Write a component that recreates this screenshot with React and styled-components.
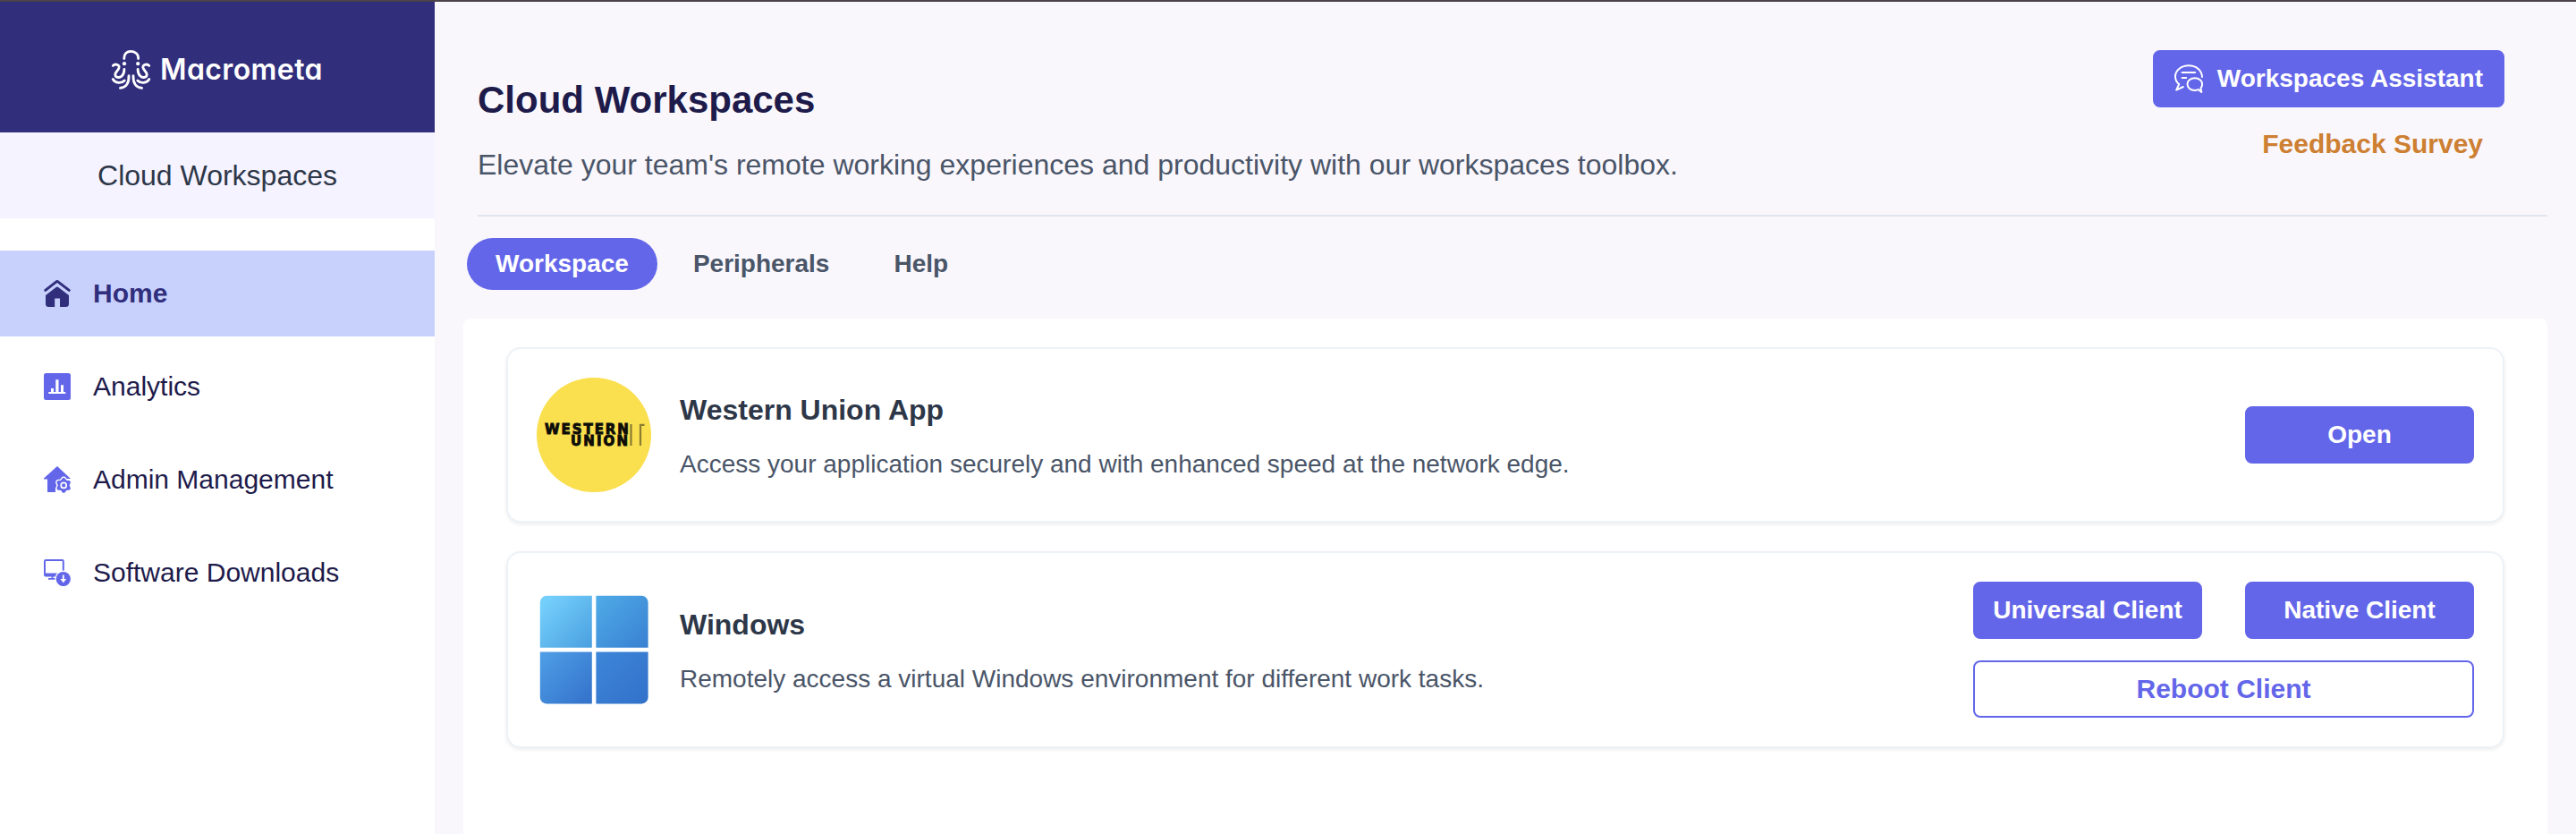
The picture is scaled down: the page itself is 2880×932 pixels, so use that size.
import React from "react";
import styled, { createGlobalStyle, css } from "styled-components";

const Global = createGlobalStyle`
  *, *::before, *::after { box-sizing: border-box; }
  body { margin: 0; background: #f9f7fc; font-family: "Liberation Sans", Arial, sans-serif; }
  h1, h2, p { margin: 0; }
  button { font: inherit; cursor: pointer; }
`;

const Page = styled.div`
  display: flex;
  height: 932px;
  overflow: hidden;
  border-top: 2px solid #4b4349;
`;

const Sidebar = styled.aside`
  width: 486px;
  flex: none;
  background: #fff;
`;

const Brand = styled.div`
  height: 146px;
  display: flex;
  align-items: center;
  gap: 9px;
  padding: 5px 0 0 124px;
  background: #312e7c;
  color: #fff;
`;

const BrandName = styled.span`
  font-family: Inter, sans-serif;
  font-size: 32px;
  font-weight: 600;
  font-feature-settings: "cv11";
  letter-spacing: 0.4px;
`;

const Product = styled.div`
  height: 96px;
  line-height: 96px;
  text-align: center;
  font-size: 32px;
  color: #2d3748;
  background: #f5f3ff;
`;

const Nav = styled.nav`
  display: flex;
  flex-direction: column;
  gap: 8px;
  padding-top: 36px;
`;

const NavItem = styled.a`
  height: 96px;
  display: flex;
  align-items: center;
  gap: 25px;
  padding-left: 49px;
  font-size: 30px;
  color: #1e1b4b;
  svg { color: #6366e9; flex: none; }
  ${(p) => p.$active && css`
    background: #c8d1fc;
    font-weight: 700;
    color: #312e7c;
    svg { color: #312e7c; }
  `}
`;

const Main = styled.main`
  flex: 1;
  padding: 54px 32px 0;
  display: flex;
  flex-direction: column;
`;

const Header = styled.header`
  height: 186px;
  margin-left: 16px;
  padding-right: 48px;
  display: flex;
  justify-content: space-between;
  border-bottom: 2px solid #e2e4ee;
`;

const Title = styled.h1`
  margin-top: 31px;
  font-size: 42px;
  line-height: 50px;
  color: #1e1b4b;
`;

const Lead = styled.p`
  margin-top: 28px;
  font-size: 32px;
  line-height: 38px;
  color: #4a5568;
`;

const HeaderActions = styled.div`
  display: flex;
  flex-direction: column;
  align-items: flex-end;
`;

const Button = styled.button`
  height: 64px;
  min-width: 256px;
  display: flex;
  align-items: center;
  justify-content: center;
  gap: 16px;
  padding: 0 22px;
  border: 2px solid #6366e9;
  border-radius: 8px;
  background: ${(p) => (p.$outline ? "#fff" : "#6366e9")};
  color: ${(p) => (p.$outline ? "#6366e9" : "#fff")};
  font-size: ${(p) => (p.$outline ? 30 : 28)}px;
  font-weight: 700;
  white-space: nowrap;
  ${(p) => p.$wide && css`grid-column: 1 / -1;`}
`;

const SurveyLink = styled.a`
  margin: 23px 24px 0 0;
  font-size: 30px;
  line-height: 36px;
  font-weight: 700;
  color: #cd7f32;
`;

const Tabs = styled.div`
  display: flex;
  gap: 8px;
  margin: 24px 0 32px 4px;
`;

const Tab = styled.button`
  height: 58px;
  padding: 0 32px;
  border: 0;
  border-radius: 29px;
  font-size: 28px;
  font-weight: 700;
  background: ${(p) => (p.$active ? "#6366e9" : "transparent")};
  color: ${(p) => (p.$active ? "#fff" : "#4a5568")};
`;

const Panel = styled.section`
  flex: 1;
  display: flex;
  flex-direction: column;
  gap: 32px;
  padding: 32px 48px;
  border-radius: 8px 8px 0 0;
  background: #fff;
`;

const Card = styled.article`
  display: flex;
  align-items: center;
  gap: 32px;
  padding: 32px;
  border: 2px solid #edf2f7;
  border-radius: 16px;
  background: #fff;
  box-shadow: 0 2px 4px rgba(0, 0, 0, 0.07);
`;

const CardBody = styled.div`
  flex: 1;
  padding-top: 2px;
`;

const CardTitle = styled.h2`
  font-size: 32px;
  line-height: 38px;
  color: #2d3748;
`;

const CardText = styled.p`
  margin-top: 25px;
  font-size: 28px;
  line-height: 34px;
  color: #4a5568;
`;

const CardActions = styled.div`
  display: grid;
  grid-template-columns: repeat(${(p) => p.$columns}, 256px);
  gap: 24px 48px;
`;

const Octopus = () => (
  <svg width="46" height="46" viewBox="0 0 46 46" fill="none" stroke="#fff" strokeWidth="2.8" strokeLinecap="round">
    <path d="M14.8 10.5V9.8C14.8 5 18 2.3 22.2 2.3S30.6 5 30.6 9.8v.7" />
    <circle cx="15" cy="16.2" r="2.1" fill="#fff" stroke="none" />
    <circle cx="30.2" cy="16.2" r="2.1" fill="#fff" stroke="none" />
    <path d="M2.3 18.4C4.2 16.2 8.6 16.6 9.2 19.6C9.8 22.8 4.8 24.8 4.8 28.2C4.8 31.6 9.4 32.6 12.2 30C14.2 28.1 14.9 26 14.9 22.4" />
    <path d="M42.7 18.4C40.8 16.2 36.4 16.6 35.8 19.6C35.2 22.8 40.2 24.8 40.2 28.2C40.2 31.6 35.6 32.6 32.8 30C30.8 28.1 30.1 26 30.1 22.4" />
    <path d="M2.2 33.4C4.6 38.4 12 38.4 15.2 35" />
    <path d="M42.8 33.4C40.4 38.4 33 38.4 29.8 35" />
    <path d="M20 29.6C20.3 38.4 17.4 42.6 10.4 43.4" />
    <path d="M25 29.6C24.7 38.4 27.6 42.6 34.6 43.4" />
  </svg>
);

const HomeIcon = () => (
  <svg width="30" height="30" viewBox="0 0 30 30" fill="currentColor">
    <path d="M1.8 11.4 13.6 2.2a2 2 0 0 1 2.6 0L28.2 11.4" fill="none" stroke="currentColor" strokeWidth="3" strokeLinecap="round" />
    <path d="M2 17 13.6 8a2.2 2.2 0 0 1 2.6 0L28 17V26.5A3.5 3.5 0 0 1 24.5 30H18V20.5H12.2V30H5.5A3.5 3.5 0 0 1 2 26.5Z" />
  </svg>
);

const AnalyticsIcon = () => (
  <svg width="30" height="30" viewBox="0 0 30 30">
    <rect width="30" height="30" rx="2.5" fill="currentColor" />
    <path d="M5.3 21h19v2h-19zM8 17h3v4.5H8zM13.3 7.2h3.2V21.5h-3.2zM19 13.2h3v8.3h-3z" fill="#fff" />
  </svg>
);

const gearPoints = Array.from({ length: 48 }, (_, i) => {
  const a = (i / 48) * Math.PI * 2;
  const r = 7.5 + 1.1 * Math.cos(6 * (a - Math.PI / 2));
  return `${(22.2 + r * Math.cos(a)).toFixed(2)},${(21.4 + r * Math.sin(a)).toFixed(2)}`;
}).join(" ");

const AdminIcon = () => (
  <svg width="30" height="30" viewBox="0 0 30 30">
    <path d="M15 0 30 14H26V29H4V14.5H0V13.6Z" fill="currentColor" />
    <path d="M13 29V24h17v6H13z" fill="#fff" />
    <polygon points={gearPoints} fill="currentColor" stroke="#fff" strokeWidth="2.8" paintOrder="stroke" strokeLinejoin="round" />
    <circle cx="22.2" cy="21.4" r="3" fill="none" stroke="#fff" strokeWidth="1.7" />
  </svg>
);

const DownloadIcon = () => (
  <svg width="30" height="30" viewBox="0 0 30 30" fill="none">
    <rect x="1" y="1" width="20.8" height="17.5" rx="1.2" stroke="currentColor" strokeWidth="2" />
    <path d="M1 15.5h20.8v3H1z" fill="currentColor" />
    <path d="M9.5 19v2.5M5 21.8h9" stroke="currentColor" strokeWidth="1.8" />
    <circle cx="21.8" cy="22" r="9.4" fill="#fff" />
    <circle cx="21.8" cy="22" r="8.1" fill="currentColor" />
    <path d="M21.8 17.5v6" stroke="#fff" strokeWidth="1.8" />
    <path d="M18.4 22h6.8l-3.4 4.3z" fill="#fff" />
  </svg>
);

const ChatIcon = () => (
  <svg width="32" height="32" viewBox="0 0 32 32" fill="none" stroke="#fff" strokeWidth="2" strokeLinecap="round" strokeLinejoin="round">
    <path d="M31 14C30.7 6.4 24 1.2 16 1.2S1 6.5 1 13.4c0 3.7 1.6 6.4 4.2 8.6L2.2 28.6 9.8 25" />
    <path d="M8.6 9h14.6M8.6 15h4.6" />
    <path d="M22.8 15.3c-4.8 0-8.3 3-8.3 6.8s3.5 6.8 8.3 6.8c1.6 0 2.7-.3 4-.8L30.3 31l-.8-4.6c1-1.2 1.6-2.6 1.6-4.3 0-3.8-3.5-6.8-8.3-6.8z" />
  </svg>
);

const WesternUnionLogo = () => (
  <svg width="128" height="128" viewBox="0 0 128 128">
    <circle cx="64" cy="64" r="64" fill="#fadf4f" />
    <g fill="#0c0c08" stroke="#0c0c08" strokeWidth="0.9" fontFamily="DejaVu Sans, sans-serif" fontWeight="700" fontSize="15">
      <text x="9" y="62.8" letterSpacing="1.95">WESTERN</text>
      <text x="38" y="76" letterSpacing="2.1">UNION</text>
    </g>
    <path d="M105.5 52v24M116 76V52.8h4.5" fill="none" stroke="#8a7c30" strokeWidth="2.2" />
  </svg>
);

const WindowsLogo = () => (
  <svg width="128" height="128" viewBox="0 0 128 128">
    <defs>
      <linearGradient id="tl" x1="0" y1="0" x2="1" y2="1"><stop offset="0.1" stopColor="#75cffb" /><stop offset="1" stopColor="#499fdf" /></linearGradient>
      <linearGradient id="tr" x1="0" y1="0" x2="1" y2="1"><stop offset="0" stopColor="#4fabe7" /><stop offset="1" stopColor="#3980d2" /></linearGradient>
      <linearGradient id="bl" x1="0" y1="0" x2="1" y2="1"><stop offset="0" stopColor="#4f9fe7" /><stop offset="1" stopColor="#3371ca" /></linearGradient>
      <linearGradient id="br" x1="0" y1="0" x2="1" y2="1"><stop offset="0" stopColor="#3d86d8" /><stop offset="1" stopColor="#3271ca" /></linearGradient>
    </defs>
    <path d="M11 3.8H61.8V61.8H3.8V11A7.2 7.2 0 0 1 11 3.8z" fill="url(#tl)" />
    <path d="M66.4 3.8H117.4A7.2 7.2 0 0 1 124.6 11V61.8H66.4z" fill="url(#tr)" />
    <path d="M3.8 66.4H61.8V124.4H11A7.2 7.2 0 0 1 3.8 117.2z" fill="url(#bl)" />
    <path d="M66.4 66.4H124.6V117.2A7.2 7.2 0 0 1 117.4 124.4H66.4z" fill="url(#br)" />
  </svg>
);

export default function App() {
  return (
    <>
      <Global />
      <Page>
        <Sidebar>
          <Brand>
            <Octopus />
            <BrandName>Macrometa</BrandName>
          </Brand>
          <Product>Cloud Workspaces</Product>
          <Nav>
            <NavItem $active><HomeIcon />Home</NavItem>
            <NavItem><AnalyticsIcon />Analytics</NavItem>
            <NavItem><AdminIcon />Admin Management</NavItem>
            <NavItem><DownloadIcon />Software Downloads</NavItem>
          </Nav>
        </Sidebar>
        <Main>
          <Header>
            <div>
              <Title>Cloud Workspaces</Title>
              <Lead>Elevate your team's remote working experiences and productivity with our workspaces toolbox.</Lead>
            </div>
            <HeaderActions>
              <Button><ChatIcon />Workspaces Assistant</Button>
              <SurveyLink>Feedback Survey</SurveyLink>
            </HeaderActions>
          </Header>
          <Tabs>
            <Tab $active>Workspace</Tab>
            <Tab>Peripherals</Tab>
            <Tab>Help</Tab>
          </Tabs>
          <Panel>
            <Card>
              <WesternUnionLogo />
              <CardBody>
                <CardTitle>Western Union App</CardTitle>
                <CardText>Access your application securely and with enhanced speed at the network edge.</CardText>
              </CardBody>
              <CardActions $columns={1}>
                <Button>Open</Button>
              </CardActions>
            </Card>
            <Card>
              <WindowsLogo />
              <CardBody>
                <CardTitle>Windows</CardTitle>
                <CardText>Remotely access a virtual Windows environment for different work tasks.</CardText>
              </CardBody>
              <CardActions $columns={2}>
                <Button>Universal Client</Button>
                <Button>Native Client</Button>
                <Button $outline $wide>Reboot Client</Button>
              </CardActions>
            </Card>
          </Panel>
        </Main>
      </Page>
    </>
  );
}
